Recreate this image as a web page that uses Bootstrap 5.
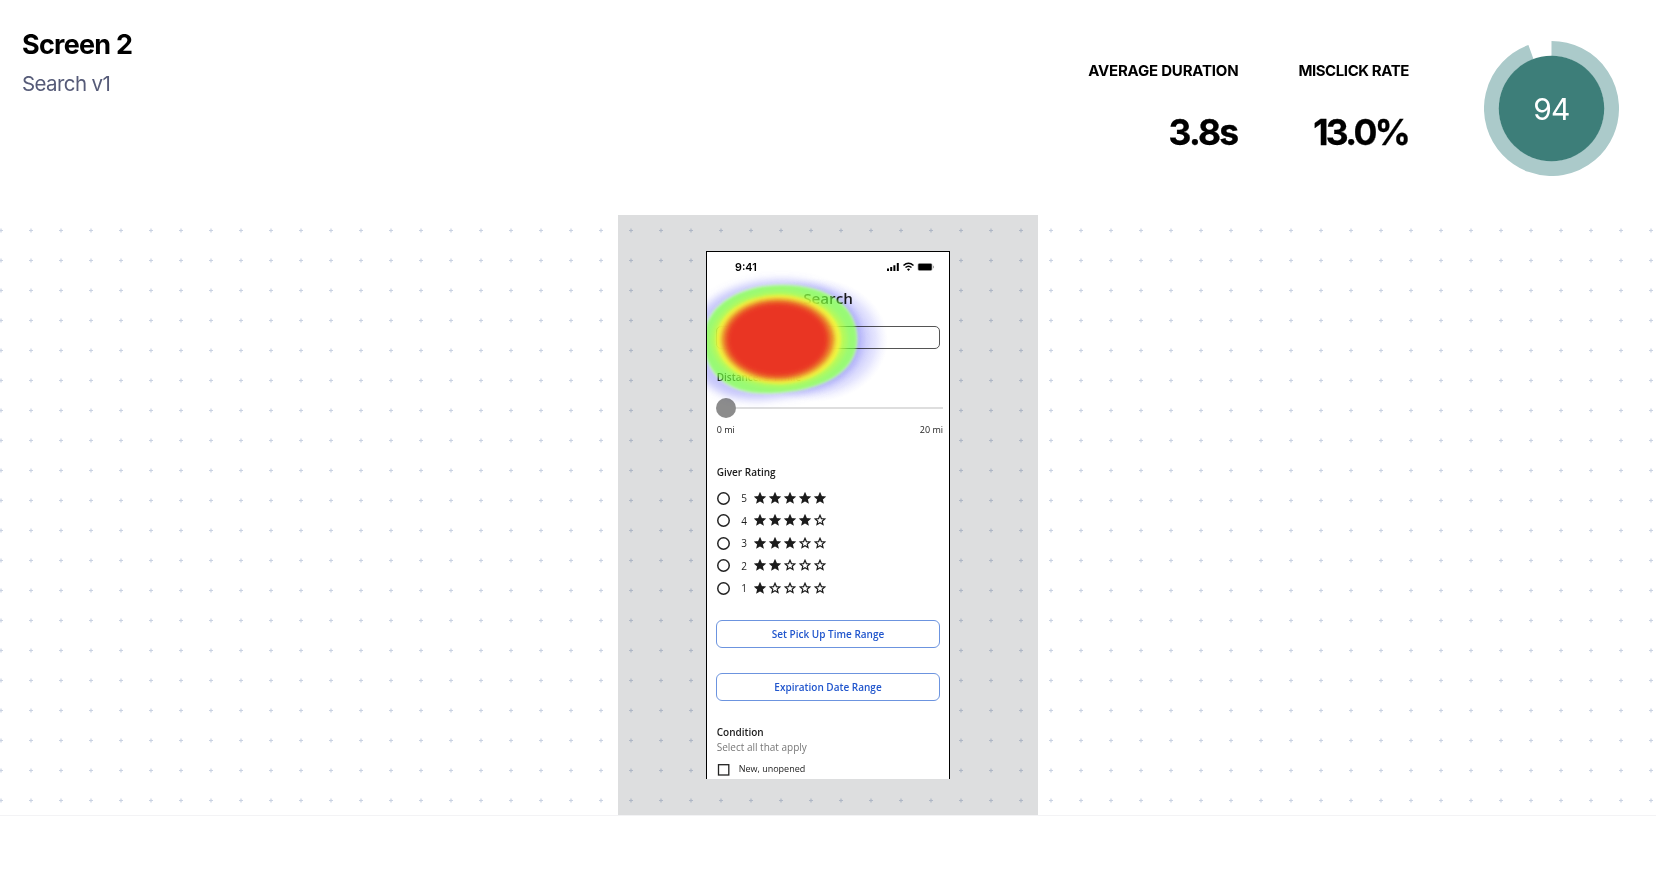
<!DOCTYPE html>
<html lang="en">
<head>
<meta charset="utf-8">
<meta name="viewport" content="width=device-width, initial-scale=1">
<title>Screen 2</title>
<link href="https://cdn.jsdelivr.net/npm/bootstrap@5.3.0/dist/css/bootstrap.min.css" rel="stylesheet">
<style>
body{font-family:Inter,"Liberation Sans",sans-serif;background:#fff;color:#000;overflow:hidden}
.report-head{height:215px;padding:0 37px 0 22px}
.screen-title{font-size:27px;font-weight:700;line-height:32px;margin-top:29px;letter-spacing:-.75px}
.screen-sub{font-size:20.5px;line-height:28px;color:#565b78;margin-top:9px;letter-spacing:-.6px}
.stat{text-align:right;font-weight:700;margin-top:60px}
.stat + .stat{margin-left:60px}
.stat-label{font-size:15px;line-height:22px;letter-spacing:-.2px;white-space:nowrap}
.stat-value{font-size:35.5px;line-height:44px;margin-top:29px;letter-spacing:-1.8px;padding-right:1px;-webkit-text-stroke:.3px #000}
.score{margin:41px 0 0 75px;width:135px;height:135px}
.canvas-area{height:601px;border-bottom:1px solid #f3f3f5}
.plus-grid{background:url("data:image/svg+xml,%3Csvg xmlns='http://www.w3.org/2000/svg' width='30' height='30'%3E%3Cpath d='M13 15.500h4M15 13.500v4' stroke='%23c0cadd' stroke-opacity='.85' stroke-width='1.200'/%3E%3C/svg%3E") -14px 0}
.viewport-shade{width:420px;height:600px;background:rgba(28,32,41,.15);padding-top:36px}
.phone{width:244px;height:528px;background:#fff;border:1px solid #000;border-bottom:0;font-family:"Open Sans","Noto Sans",sans-serif;color:#1c1c1c;font-size:10px;line-height:14px;padding:0 9px}
.status-bar{height:31px;padding:0 6px 0 19px;font:600 10.8px/31px Inter,sans-serif;color:#000}
.phone-title{font-size:15.2px;font-weight:600;line-height:20px;margin-top:4.5px}
.search-box{height:23px;border:1px solid #555;border-radius:5px;margin-top:18.5px;line-height:21px;padding-left:11px;color:#777;width:224px}
.semi{font-weight:600}
.nudge{padding-left:.7px}
.slider-row{height:20px;margin-top:14px;width:227px}
.knob{width:20px;height:20px;border-radius:50%;background:#8c8c8c}
.track{height:2px;background:#dedede}
.small-lbl{font-size:9px;line-height:12px}
.rate-row{height:22.5px;gap:11px;font-size:10px}
.ring{width:13px;height:13px;box-shadow:inset 0 0 0 1.5px #222;border-radius:50%;margin-left:.5px}
.phone-btn{width:224px;height:28px;border:1px solid #6c94df;border-radius:6px;color:#2156cd;font-weight:600;font-size:10px;padding:0;line-height:26px}
.heat{left:0;top:0;pointer-events:none}
.heat-halo{mix-blend-mode:multiply}
</style>
</head>
<body>
<header class="report-head d-flex align-items-start">
  <div class="me-auto">
    <h1 class="screen-title mb-0">Screen 2</h1>
    <p class="screen-sub mb-0">Search v1</p>
  </div>
  <div class="stat"><div class="stat-label">AVERAGE DURATION</div><div class="stat-value">3.8s</div></div>
  <div class="stat"><div class="stat-label" style="letter-spacing:-.42px">MISCLICK RATE</div><div class="stat-value" style="letter-spacing:-2.700px">13.0%</div></div>
  <svg class="score" viewBox="0 0 135 135">
    <path d="M67.500 7.500A60 60 0 1 1 46.980 11.120" fill="none" stroke="#abcaca" stroke-width="15"/>
    <circle cx="67.500" cy="67.500" r="52.700" fill="#3d7e79"/>
    <text x="67.500" y="78.500" text-anchor="middle" font-size="30" fill="#fff" letter-spacing="-.8">94</text>
  </svg>
</header>
<main class="canvas-area plus-grid d-flex justify-content-center">
  <div class="viewport-shade">
    <div class="phone mx-auto position-relative overflow-hidden">
      <div class="status-bar d-flex justify-content-between align-items-center">
        <span>9:41</span>
        <svg width="47" height="10" viewBox="0 0 47 10" style="margin-top:-2px">
          <path d="M1 6.500v2.500M4.200 5v4M7.400 3.300v5.700M10.800 1v8" stroke="#000" stroke-width="2"/>
          <path d="M16.500 3.500q5-4.500 10 0M18.500 5.500q3-2.600 6 0" fill="none" stroke="#000" stroke-width="1.500"/><path d="M20 7.200q1.500-1.200 3 0L21.500 9z"/>
          <rect x="30.500" y="1" width="15" height="8" rx="2" fill="#bbb"/><rect x="31.300" y="1.800" width="13.400" height="6.400" rx="1"/><path d="M46.500 3.800v2.400" stroke="#aaa"/>
        </svg>
      </div>
      <div class="phone-title text-center">Search</div>
      <div class="search-box">Enter any search terms</div>
      <div class="semi nudge" style="margin-top:21px">Distance: ≤ 1 mile</div>
      <div class="slider-row d-flex align-items-center"><span class="knob flex-shrink-0"></span><span class="track flex-grow-1"></span></div>
      <div class="small-lbl nudge d-flex justify-content-between" style="margin-top:6px;width:227px"><span>0 mi</span><span>20 mi</span></div>
      <div class="semi nudge" style="margin-top:29px">Giver Rating</div>
      <div id="ratings" class="nudge" style="margin-top:8px"></div>
      <div class="phone-btn text-center" style="margin-top:20.500px">Set Pick Up Time Range</div>
      <div class="phone-btn text-center" style="margin-top:24.500px">Expiration Date Range</div>
      <div class="semi nudge" style="margin-top:24px">Condition</div>
      <div class="nudge" style="margin-top:1px;color:#777">Select all that apply</div>
      <div class="d-flex small-lbl nudge align-items-center" style="margin-top:9px;gap:9px">
        <svg width="13" height="13" viewBox="0 0 13 13"><rect x="1.500" y="1.700" width="10.300" height="10.300" fill="none" stroke="#222" stroke-width="1.300"/></svg><span>New, unopened</span>
      </div>
      <svg class="heat heat-halo position-absolute" width="242" height="200" viewBox="707 252 242 200">
        <defs>
          <radialGradient id="halo"><stop offset=".5" stop-color="#7c7cf4" stop-opacity=".5"/><stop offset=".68" stop-color="#7c7cf6" stop-opacity=".38"/><stop offset=".84" stop-color="#8d8dfa" stop-opacity=".22"/><stop offset="1" stop-color="#b8b8ff" stop-opacity="0"/></radialGradient>
          <filter id="b1"><feGaussianBlur stdDeviation="1.700"/></filter>
          <filter id="b2"><feGaussianBlur stdDeviation="2.600"/></filter>
          <filter id="b3" x="-20%" y="-20%" width="140%" height="140%"><feGaussianBlur stdDeviation="4"/></filter>
          <mask id="outside" maskUnits="userSpaceOnUse" x="600" y="200" width="400" height="300"><rect x="600" y="200" width="400" height="300" fill="#fff"/><path d="M704 340C704 306 739 285 782 285C829 285 857 307 857 339C857 376 815 391 774 393C731 396 704 376 704 340Z" fill="#000" filter="url(#b1)"/></mask>
        </defs>
        <g mask="url(#outside)">
          <ellipse cx="814" cy="340" rx="74" ry="62" fill="url(#halo)"/>
          <path d="M690 345C690 302 735 280 782 280C830 280 860 305 860 339C860 380 815 395 776 398C728 406 690 386 690 345Z" fill="#7070f6" fill-opacity=".4" filter="url(#b3)"/>
        </g>
      </svg>
      <svg class="heat position-absolute" width="242" height="200" viewBox="707 252 242 200">
        <path d="M704 340C704 306 739 285 782 285C829 285 857 307 857 339C857 376 815 391 774 393C731 396 704 376 704 340Z" fill="#6cf83c" fill-opacity=".7" filter="url(#b1)"/>
        <ellipse cx="779" cy="339.500" rx="68" ry="47.500" fill="#d8fa3c" fill-opacity=".5" filter="url(#b2)"/>
        <ellipse cx="778.500" cy="339.500" rx="62.500" ry="44.500" fill="#fff83c" fill-opacity=".8" filter="url(#b1)"/>
        <ellipse cx="778" cy="339.500" rx="56.500" ry="40.500" fill="#ea6428" fill-opacity=".8" filter="url(#b2)"/>
        <ellipse cx="777.500" cy="339.500" rx="51" ry="37" fill="#e93423" fill-opacity=".97" filter="url(#b2)"/>
      </svg>
    </div>
  </div>
</main>
<script src="https://cdn.jsdelivr.net/npm/bootstrap@5.3.0/dist/js/bootstrap.bundle.min.js"></script>
<script>
const star = 'M6 1.300 7.400 4.600l3.400.3-2.600 2.300.8 3.400L6 8.800 3 10.600l.8-3.400-2.600-2.300 3.400-.3z';
const box = document.getElementById('ratings');
for (let n = 5; n > 0; n--) {
  let s = '';
  for (let i = 0; i < 5; i++) s += `<path transform="translate(${i * 15})" d="${star}" fill="${i < n ? '#1c1c1c' : 'none'}" stroke="#1c1c1c" stroke-width="1.200"/>`;
  box.innerHTML += `<div class="rate-row d-flex align-items-center"><span class="ring"></span><span>${n}</span><svg width="73" height="12" viewBox="0 0 73 12" style="margin:-1px 0 0 -4px">${s}</svg></div>`;
}
</script>
</body>
</html>
